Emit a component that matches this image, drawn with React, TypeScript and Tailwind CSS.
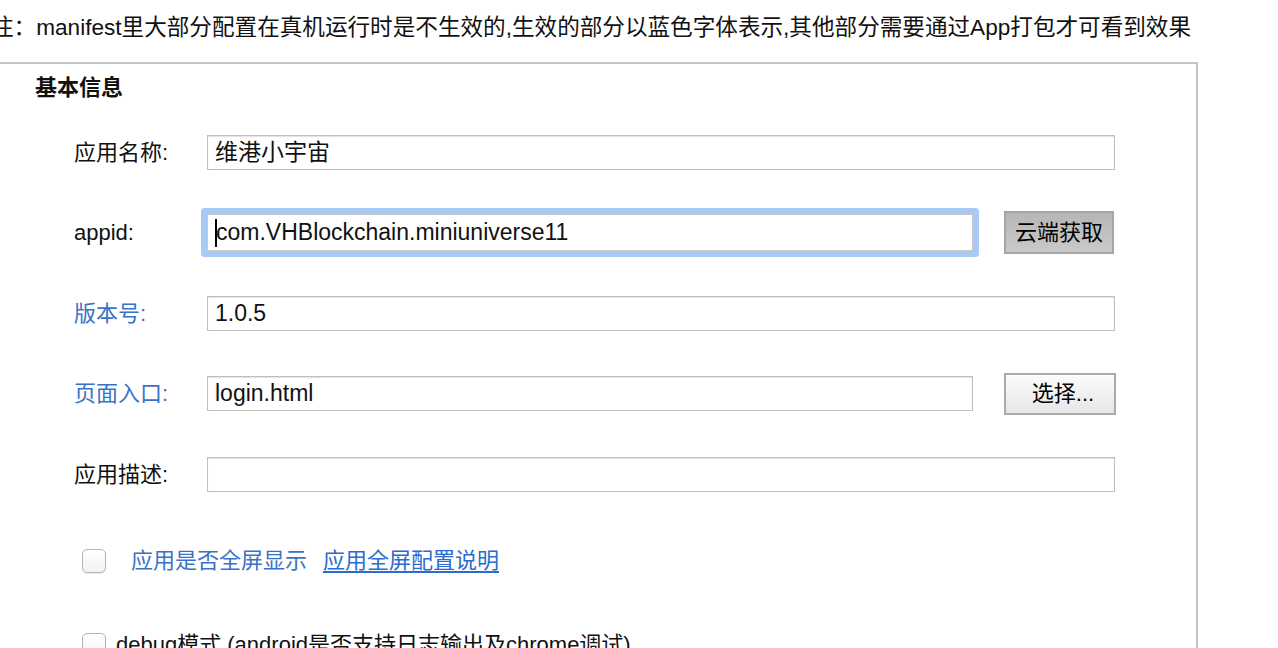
import React from "react";

const font = "font-['Liberation_Sans','Noto_Sans_CJK_SC',sans-serif]";

function Field({ text, wide = true }: { text?: string; wide?: boolean }) {
  return (
    <div
      className={`h-[35px] ${wide ? "w-[908px]" : "w-[766px]"} border border-[#bfbfbf] bg-white shadow-[inset_0_1px_1px_rgba(0,0,0,0.12)] pl-[7px] flex items-center text-[23px] text-[#111]`}
    >
      {text}
    </div>
  );
}

function Row({ label, blue, h, children }: { label: string; blue?: boolean; h: string; children: React.ReactNode }) {
  return (
    <div className={`flex items-center ${h}`}>
      <div className={`w-[207px] pl-[74px] text-[22px] ${blue ? "text-[#3a72c7]" : "text-[#111]"}`}>{label}</div>
      {children}
    </div>
  );
}

export default function App() {
  return (
    <div className={`w-[1278px] h-[648px] bg-white overflow-hidden ${font}`}>
      <p className="h-[62px] -ml-[9px] whitespace-nowrap text-[22.6px] leading-[56px] text-[#111]">
        注：manifest里大部分配置在真机运行时是不生效的,生效的部分以蓝色字体表示,其他部分需要通过App打包才可看到效果
      </p>

      <div className="w-[1198px] h-[600px] border-t-2 border-r-2 border-[#c6c6c6]">
        <h3 className="pl-[35px] pt-[9px] h-[48px] text-[22px] leading-[30px] font-bold text-[#111]">基本信息</h3>

        <Row label="应用名称:" h="h-[80px]">
          <Field text="维港小宇宙" />
        </Row>

        <Row label="appid:" h="h-[81px]">
          <div className="h-[37px] w-[766px] border border-[#c8c8c8] bg-white shadow-[0_0_0_6px_#a9caf4] rounded-[1px] pl-[7px] flex items-center text-[23px] text-[#111]">
            <span className="inline-block w-[2px] h-[28px] bg-black -mr-[1px]" />
            com.VHBlockchain.miniuniverse11
          </div>
          <button className="ml-[31px] h-[43px] w-[110px] border-2 border-[#a6a6a6] bg-gradient-to-b from-[#b6b6b6] to-[#c9c9c9] text-[22px] text-black">
            云端获取
          </button>
        </Row>

        <Row label="版本号:" blue h="h-[80px]">
          <Field text="1.0.5" />
        </Row>

        <Row label="页面入口:" blue h="h-[81px]">
          <Field text="login.html" wide={false} />
          <button className="ml-[31px] h-[42px] w-[112px] border-2 border-[#aaaaaa] bg-gradient-to-b from-[#fcfcfc] to-[#e6e6e6] text-[22px] text-black pl-[6px]">
            选择...
          </button>
        </Row>

        <Row label="应用描述:" h="h-[80px]">
          <Field />
        </Row>

        <div className="flex items-center h-[86px] pl-[82px] pt-[7px]">
          <span className="w-[24px] h-[24px] rounded-[5px] border border-[#b3b3b3] bg-gradient-to-b from-white to-[#f2f2f2] shadow-[0_1px_1px_rgba(0,0,0,0.08)]" />
          <span className="ml-[25px] text-[22px] text-[#3a72c7]">应用是否全屏显示</span>
          <a className="ml-[16px] text-[22px] text-[#2c6bcf] underline underline-offset-[3px]">应用全屏配置说明</a>
        </div>

        <div className="flex items-start h-[60px] pl-[82px] pt-[30px]">
          <span className="w-[24px] h-[24px] rounded-[5px] border border-[#b3b3b3] bg-gradient-to-b from-white to-[#f2f2f2] mt-[3px]" />
          <span className="ml-[10px] text-[22px] leading-[30px] text-[#111] whitespace-nowrap">debug模式 (android是否支持日志输出及chrome调试)</span>
        </div>
      </div>
    </div>
  );
}
